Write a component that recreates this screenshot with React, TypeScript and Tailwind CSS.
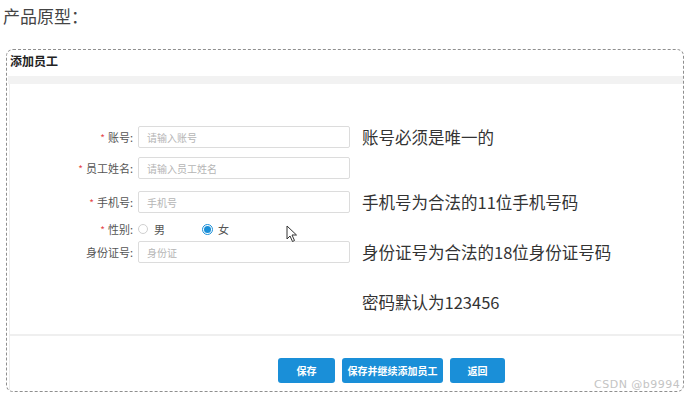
import React from 'react'

const cjk = { fontFamily: '"Noto Sans CJK SC", "Noto Sans", sans-serif' }

type Row = {
  label: string
  required?: boolean
  placeholder?: string
  note?: string
  top: string
}

function Label({ label, required }: { label: string; required?: boolean }) {
  return (
    <div className="w-[123px] shrink-0 flex justify-end items-center text-[11px] text-[#555]">
      {required && <span className="text-[#e5484d] mr-[3px] text-[10px]">*</span>}
      <span>{label}:</span>
    </div>
  )
}

function InputRow({ label, required, placeholder, note, top }: Row) {
  return (
    <div className={`flex items-center h-[22px] ${top}`}>
      <Label label={label} required={required} />
      <div className="ml-[5px] w-[212px] h-[22px] border border-[#dcdcdc] rounded-[2px] flex items-center px-[8px] text-[10px] text-[#b5b5b5]">
        {placeholder}
      </div>
      {note && <div className="ml-[12px] text-[16.5px] text-[#333]">{note}</div>}
    </div>
  )
}

function Cursor() {
  return (
    <svg className="absolute left-[286px] top-[225px]" width="12" height="18" viewBox="0 0 12 18">
      <path d="M1 1 L1 14 L4 11 L6.5 16.5 L8.5 15.5 L6 10 L10.5 10 Z" fill="#fff" stroke="#333" strokeWidth="1" strokeLinejoin="round" />
    </svg>
  )
}

export default function App() {
  return (
    <div className="relative w-[686px] h-[397px] bg-white overflow-hidden" style={cjk}>
      <div className="pl-[3px] pt-[4px] h-[49px] text-[17px] text-[#444] leading-[24px]">产品原型：</div>

      <div className="ml-[6px] mr-[2px] h-[343px] border border-dashed border-[#8f8f8f] rounded-[7px] flex flex-col overflow-hidden">
        <div className="h-[26px] pl-[3px] pt-[2px] text-[12px] font-bold text-[#222] leading-[18px]">添加员工</div>
        <div className="h-[8px] bg-[#f2f2f2] ml-[1px]" />

        <div className="flex-1 ml-[2px] border-l border-[#ececec] relative">
          <InputRow label="账号" required placeholder="请输入账号" note="账号必须是唯一的" top="mt-[42px]" />
          <InputRow label="员工姓名" required placeholder="请输入员工姓名" top="mt-[9px]" />
          <InputRow label="手机号" required placeholder="手机号" note="手机号为合法的11位手机号码" top="mt-[12px]" />

          <div className="flex items-center h-[16px] mt-[8px]">
            <Label label="性别" required />
            <div className="ml-[5px] flex items-center text-[11px] text-[#555]">
              <span className="w-[10px] h-[10px] rounded-full border border-[#d0d0d0] bg-white" />
              <span className="ml-[6px]">男</span>
              <span className="ml-[37px] w-[11px] h-[11px] rounded-full border border-[#1a8fd8] flex items-center justify-center">
                <span className="w-[7px] h-[7px] rounded-full bg-[#1a8fd8]" />
              </span>
              <span className="ml-[5px]">女</span>
            </div>
          </div>

          <InputRow label="身份证号" placeholder="身份证" note="身份证号为合法的18位身份证号码" top="mt-[4px]" />

          <div className="flex items-center h-[22px] mt-[28px]">
            <div className="w-[352px] shrink-0" />
            <div className="text-[16.5px] text-[#333]">密码默认为123456</div>
          </div>

          <div className="mt-[21px] h-[2px] bg-[#efefef]" />

          <div className="flex mt-[22px] pl-[268px] gap-[7px]">
            <button className="w-[57px] h-[25px] rounded-[3px] bg-[#1a8fd8] text-white text-[10px] font-bold">保存</button>
            <button className="w-[101px] h-[25px] rounded-[3px] bg-[#1a8fd8] text-white text-[10px] font-bold">保存并继续添加员工</button>
            <button className="w-[55px] h-[25px] rounded-[3px] bg-[#1a8fd8] text-white text-[10px] font-bold">返回</button>
          </div>
        </div>
      </div>

      <div className="absolute left-[594px] top-[377px] text-[11px] text-[#c4c4c4] tracking-[0.5px]" style={{ fontFamily: '"DejaVu Sans", sans-serif' }}>
        CSDN @b9994
      </div>
      <Cursor />
    </div>
  )
}
